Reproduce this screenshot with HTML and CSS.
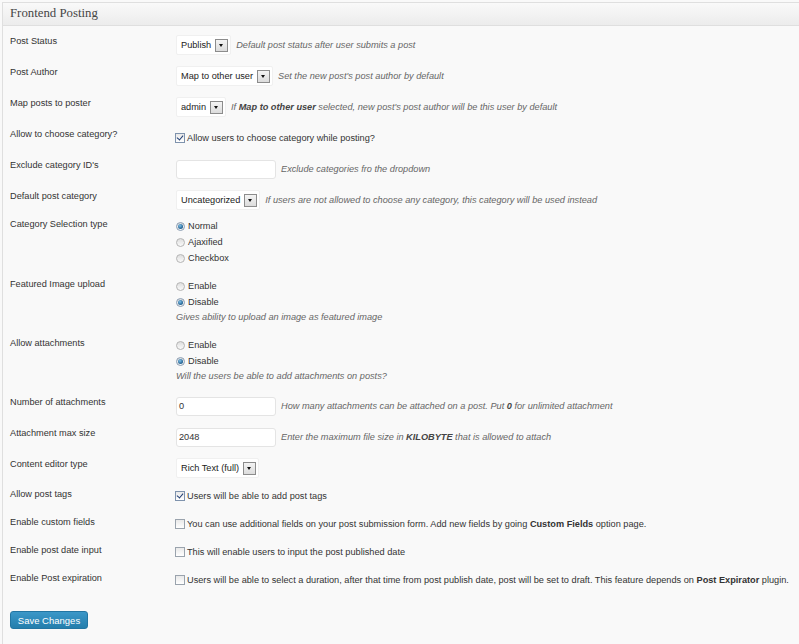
FILE: index.html
```html
<!DOCTYPE html>
<html lang="en">
<head>
<meta charset="UTF-8">
<meta name="viewport" content="width=device-width, initial-scale=1.0">
<title>Frontend Posting</title>
<link rel="stylesheet" href="styles.css">
</head>
<body>

<div class="postbox">
  <h3 class="postbox-title">Frontend Posting</h3>

  <form id="frontendPosting">
    <div class="settings">

      <div class="row">
        <div class="row-label">Post Status</div>
        <div class="row-field">
          <span class="select">Publish<span class="arrow"></span></span>
          <span class="desc">Default post status after user submits a post</span>
        </div>
      </div>

      <div class="row">
        <div class="row-label">Post Author</div>
        <div class="row-field">
          <span class="select">Map to other user<span class="arrow"></span></span>
          <span class="desc">Set the new post's post author by default</span>
        </div>
      </div>

      <div class="row">
        <div class="row-label">Map posts to poster</div>
        <div class="row-field">
          <span class="select">admin<span class="arrow"></span></span>
          <span class="desc">If <b>Map to other user</b> selected, new post's post author will be this user by default</span>
        </div>
      </div>

      <div class="row row-check-tall">
        <div class="row-label">Allow to choose category?</div>
        <div class="row-field check-field">
          <span class="checkbox checked"></span><span>Allow users to choose category while posting?</span>
        </div>
      </div>

      <div class="row">
        <div class="row-label">Exclude category ID's</div>
        <div class="row-field">
          <span class="text-input"></span>
          <span class="desc">Exclude categories fro the dropdown</span>
        </div>
      </div>

      <div class="row row-short">
        <div class="row-label">Default post category</div>
        <div class="row-field">
          <span class="select">Uncategorized<span class="arrow"></span></span>
          <span class="desc">If users are not allowed to choose any category, this category will be used instead</span>
        </div>
      </div>

      <div class="row row-radio">
        <div class="row-label">Category Selection type</div>
        <div class="row-field radio-group">
          <div class="radio-line"><span class="radio checked"></span>Normal</div>
          <div class="radio-line"><span class="radio"></span>Ajaxified</div>
          <div class="radio-line"><span class="radio"></span>Checkbox</div>
        </div>
      </div>

      <div class="row row-radio">
        <div class="row-label">Featured Image upload</div>
        <div class="row-field radio-group">
          <div class="radio-line"><span class="radio"></span>Enable</div>
          <div class="radio-line"><span class="radio checked"></span>Disable</div>
          <div class="desc desc-block">Gives ability to upload an image as featured image</div>
        </div>
      </div>

      <div class="row row-radio">
        <div class="row-label">Allow attachments</div>
        <div class="row-field radio-group">
          <div class="radio-line"><span class="radio"></span>Enable</div>
          <div class="radio-line"><span class="radio checked"></span>Disable</div>
          <div class="desc desc-block">Will the users be able to add attachments on posts?</div>
        </div>
      </div>

      <div class="row">
        <div class="row-label">Number of attachments</div>
        <div class="row-field">
          <span class="text-input">0</span>
          <span class="desc">How many attachments can be attached on a post. Put <b>0</b> for unlimited attachment</span>
        </div>
      </div>

      <div class="row">
        <div class="row-label">Attachment max size</div>
        <div class="row-field">
          <span class="text-input">2048</span>
          <span class="desc">Enter the maximum file size in <b>KILOBYTE</b> that is allowed to attach</span>
        </div>
      </div>

      <div class="row row-tight">
        <div class="row-label">Content editor type</div>
        <div class="row-field">
          <span class="select">Rich Text (full)<span class="arrow"></span></span>
        </div>
      </div>

      <div class="row row-check">
        <div class="row-label">Allow post tags</div>
        <div class="row-field check-field">
          <span class="checkbox checked"></span><span>Users will be able to add post tags</span>
        </div>
      </div>

      <div class="row row-check">
        <div class="row-label">Enable custom fields</div>
        <div class="row-field check-field">
          <span class="checkbox"></span><span>You can use additional fields on your post submission form. Add new fields by going <b>Custom Fields</b> option page.</span>
        </div>
      </div>

      <div class="row row-check">
        <div class="row-label">Enable post date input</div>
        <div class="row-field check-field">
          <span class="checkbox"></span><span>This will enable users to input the post published date</span>
        </div>
      </div>

      <div class="row row-check">
        <div class="row-label">Enable Post expiration</div>
        <div class="row-field check-field">
          <span class="checkbox"></span><span>Users will be able to select a duration, after that time from post publish date, post will be set to draft. This feature depends on <b>Post Expirator</b> plugin.</span>
        </div>
      </div>

    </div>

    <div class="submit">
      <button type="submit" class="button-primary">Save Changes</button>
    </div>
  </form>
</div>

</body>
</html>
```

FILE: styles.css
```css
body {
  margin: 0;
  background-color: #f9f9f9;
  font-family: "Liberation Sans", Arial, sans-serif;
  font-size: 9.2px;
  color: #333;
}
.postbox {
  margin: 2px 0 0 2px;
  border: 1px solid #dfdfdf;
  border-right: none;
  border-bottom: none;
  background-color: #f9f9f9;
  min-height: 660px;
}
.postbox-title {
  margin: 0;
  height: 22px;
  line-height: 21px;
  padding-left: 7px;
  font-family: "Liberation Serif", Georgia, serif;
  font-size: 12.8px;
  font-weight: normal;
  color: #464646;
  background: linear-gradient(#f9f9f9, #ececec);
  border-bottom: 1px solid #dfdfdf;
}
.settings {
  padding-top: 3px;
}
.row {
  display: flex;
  padding: 5px 0;
}
.row-label {
  width: 166px;
  padding-left: 7px;
  line-height: 14px;
  flex-shrink: 0;
}
.row-field {
  display: flex;
  align-items: center;
  height: 20px;
  margin-top: 1px;
  white-space: nowrap;
}
.row-short {
  padding-bottom: 2px;
}
.row-tight {
  padding-bottom: 4px;
}
.row-check {
  padding-bottom: 5px;
}
.row-check .row-field {
  height: 18px;
  margin-top: 0;
}
.row-check-tall .row-field {
  height: 21px;
  margin-top: 0;
}
.row-radio {
  padding-bottom: 6px;
}
.row-radio .row-field {
  display: block;
  height: auto;
}
.radio-line {
  display: flex;
  align-items: center;
  height: 16px;
}
.desc {
  margin-left: 5px;
  font-style: italic;
  color: #666;
}
.desc b {
  color: #444;
}
.desc-block {
  margin-left: 0;
  line-height: 15px;
}
.select {
  display: inline-flex;
  align-items: center;
  box-sizing: border-box;
  height: 20px;
  padding: 0 2px 0 4px;
  background-color: #fff;
  border: 1px solid #f0f0f0;
  border-radius: 2px;
  color: #222;
}
.select .arrow {
  position: relative;
  box-sizing: border-box;
  width: 13px;
  height: 13px;
  margin-left: 4px;
  border: 1px solid #8c8c8c;
  background: linear-gradient(#f4f4f4, #dcdcdc);
}
.select .arrow::after {
  content: "";
  position: absolute;
  left: 3px;
  top: 4px;
  border-left: 2.5px solid transparent;
  border-right: 2.5px solid transparent;
  border-top: 3px solid #111;
}
.text-input {
  display: inline-block;
  box-sizing: border-box;
  width: 100px;
  height: 19px;
  line-height: 17px;
  padding-left: 2px;
  background-color: #fff;
  border: 1px solid #e4e4e4;
  border-radius: 3px;
  color: #333;
}
.checkbox {
  position: relative;
  display: inline-block;
  flex-shrink: 0;
  box-sizing: border-box;
  width: 10px;
  height: 10px;
  margin: 0 2px 0 -1px;
  border: 1px solid #9aa3ad;
  background: linear-gradient(#e9e9e9, #ffffff);
}
.checkbox.checked {
  border-color: #7f93ad;
}
.checkbox.checked::after {
  content: "";
  position: absolute;
  left: 2px;
  top: 0;
  width: 3px;
  height: 5px;
  border-right: 1.5px solid #213e74;
  border-bottom: 1.5px solid #213e74;
  transform: rotate(40deg);
}
.radio {
  position: relative;
  display: inline-block;
  box-sizing: border-box;
  width: 9px;
  height: 9px;
  margin-right: 3px;
  border: 1px solid #b4b4b4;
  border-radius: 50%;
  background: linear-gradient(#dedede, #fafafa);
}
.radio.checked {
  border-color: #8a9db3;
}
.radio.checked::after {
  content: "";
  position: absolute;
  left: 1px;
  top: 1px;
  width: 5px;
  height: 5px;
  border-radius: 50%;
  background: radial-gradient(circle at 40% 35%, #7fc0e8, #1f5f8f 70%);
}
.submit {
  padding: 17px 0 0 7px;
}
.button-primary {
  height: 18px;
  width: 78px;
  padding: 0;
  font-family: "Liberation Sans", Arial, sans-serif;
  font-size: 9.5px;
  color: #fff;
  background: linear-gradient(#3b97c8, #247eac);
  border: 1px solid #2275a2;
  border-radius: 3px;
  cursor: pointer;
}
```
